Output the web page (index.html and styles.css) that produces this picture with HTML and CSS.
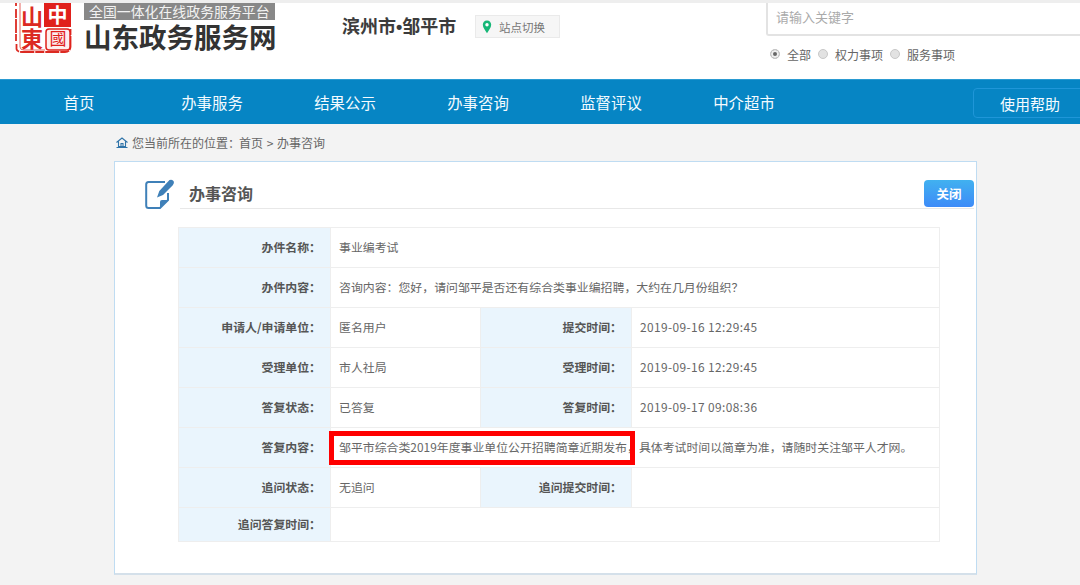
FILE: index.html
```html
<!DOCTYPE html>
<html lang="zh-CN">
<head>
<meta charset="utf-8">
<title>办事咨询</title>
<link rel="stylesheet" href="styles.css">
</head>
<body>
<header class="top">
  <div class="seal-wrap">
    <svg class="seal" width="60" height="52" viewBox="0 0 60 52">
      <path d="M1 0V3M1 6V38M1.500 41V46Q2 49 7 49H50Q55 49 55.500 44V26" fill="none" stroke="#dc2a22" stroke-width="1.800" stroke-dasharray="9 1 14 1"/>
      <path d="M5 0V44Q5 47 9 47H30" fill="none" stroke="#e6625d" stroke-width="1"/>
      <rect x="29" y="0" width="27" height="24" fill="#e0201b"/>
      <rect x="31" y="26" width="24" height="21" rx="3" fill="#fdeeee" stroke="#e0201b" stroke-width="1.500"/>
      <text x="42.500" y="20" class="seal-w">中</text>
      <text x="43" y="42" class="seal-ws">國</text>
      <text x="17" y="22" class="seal-r">山</text>
      <text x="17" y="44" class="seal-r">東</text>
    </svg>
  </div>
  <div class="brand">
    <div class="slogan">全国一体化在线政务服务平台</div>
    <div class="brand-name">山东政务服务网</div>
  </div>
  <div class="city">滨州市•邹平市</div>
  <div class="switch">
    <svg width="10" height="14" viewBox="0 0 10 14"><path d="M5 0.500C2.400 0.500 0.800 2.500 0.800 4.800C0.800 7.600 3.500 10.600 5 13.200C6.500 10.600 9.200 7.600 9.200 4.800C9.200 2.500 7.600 0.500 5 0.500Z" fill="#16b777"/><circle cx="5" cy="4.800" r="1.700" fill="#fff"/></svg>
    <span>站点切换</span>
  </div>
  <div class="search">
    <div class="search-box">请输入关键字</div>
    <div class="radios">
      <span class="radio checked"></span><span class="radio-label">全部</span>
      <span class="radio"></span><span class="radio-label">权力事项</span>
      <span class="radio"></span><span class="radio-label">服务事项</span>
    </div>
  </div>
</header>
<nav class="nav">
  <a class="nav-item">首页</a>
  <a class="nav-item">办事服务</a>
  <a class="nav-item">结果公示</a>
  <a class="nav-item">办事咨询</a>
  <a class="nav-item">监督评议</a>
  <a class="nav-item">中介超市</a>
  <a class="help">使用帮助</a>
</nav>
<main class="main">
  <div class="crumb">
    <svg width="12" height="11" viewBox="0 0 12 11"><path d="M0.500 5.500L6 1L11.500 5.500M2.500 4.500V9.500H9.500V4.500M5 9.500V6.500H7V9.500M0.500 10.500H11.500" fill="none" stroke="#2f73a8" stroke-width="1.100"/></svg>
    <span>您当前所在的位置：</span><span class="crumb-path">首页 &gt; 办事咨询</span>
  </div>
  <section class="panel">
    <div class="panel-head">
      <svg class="panel-icon" width="30" height="30" viewBox="0 0 30 30">
        <path d="M20 3H3.500Q1.200 3 1.200 5.500V26.500Q1.200 29 3.500 29H15L23 21V14" fill="none" stroke="#3f80b8" stroke-width="2"/>
        <path d="M15 29V23Q15 21 17 21H23Z" fill="#3f80b8"/>
        <path d="M24.500 1Q27.500 0 28.700 2.200Q29.700 4.500 27.800 6.200L18 16L12 18.500L14.300 12Z" fill="#3f80b8"/>
      </svg>
      <h1 class="panel-title">办事咨询</h1>
      <button class="close">关闭</button>
    </div>
    <table class="info">
      <colgroup><col class="c1"><col class="c2"><col class="c3"><col class="c4"></colgroup>
      <tr><th>办件名称：</th><td colspan="3">事业编考试</td></tr>
      <tr><th>办件内容：</th><td colspan="3">咨询内容：您好，请问邹平是否还有综合类事业编招聘，大约在几月份组织？</td></tr>
      <tr><th>申请人/申请单位：</th><td>匿名用户</td><th>提交时间：</th><td class="time">2019-09-16 12:29:45</td></tr>
      <tr><th>受理单位：</th><td>市人社局</td><th>受理时间：</th><td class="time">2019-09-16 12:29:45</td></tr>
      <tr><th>答复状态：</th><td>已答复</td><th>答复时间：</th><td class="time">2019-09-17 09:08:36</td></tr>
      <tr><th>答复内容：</th><td colspan="3" class="answer"><span class="mark"></span>邹平市综合类2019年度事业单位公开招聘简章近期发布，具体考试时间以简章为准，请随时关注邹平人才网。</td></tr>
      <tr><th>追问状态：</th><td>无追问</td><th>追问提交时间：</th><td></td></tr>
      <tr class="last"><th>追问答复时间：</th><td colspan="3"></td></tr>
    </table>
  </section>
</main>
</body>
</html>
```
FILE: styles.css
```css
* { box-sizing: border-box; }
html, body { margin: 0; padding: 0; }
body {
  width: 1080px;
  height: 585px;
  overflow: hidden;
  background: #f3f3f3;
  font-family: "Noto Sans CJK SC", "Liberation Sans", sans-serif;
  color: #555;
}
.top {
  height: 79px;
  background: #fff;
  border-top: 3px solid #eee;
  display: flex;
  align-items: flex-start;
}
.seal-wrap { width: 84px; padding-left: 15px; height: 52px; }
.seal { display: block; overflow: visible; }
.seal-w { font-size: 20px; fill: #fff; text-anchor: middle; font-weight: 700; }
.seal-ws { font-size: 17px; fill: #e0201b; text-anchor: middle; }
.seal-r { font-size: 22px; fill: #dc2a22; text-anchor: middle; font-weight: 700; }
.brand { width: 258px; }
.slogan {
  width: 191px;
  height: 17px;
  background: #888;
  color: #f2f2f2;
  font-size: 13.900px;
  line-height: 17px;
  padding-left: 5px;
  white-space: nowrap;
}
.brand-name {
  font-size: 27.500px;
  line-height: 32px;
  font-weight: 700;
  color: #333;
  white-space: nowrap;
}
.city {
  width: 133px;
  margin-top: 12px;
  font-family: "Liberation Sans", "Noto Sans CJK SC", sans-serif;
  font-size: 18px;
  line-height: 24px;
  font-weight: 700;
  color: #3c3c3c;
  white-space: nowrap;
}
.switch {
  width: 85px;
  height: 23px;
  margin-top: 12px;
  background: #f6f6f6;
  border: 1px solid #eaeaea;
  display: flex;
  align-items: center;
  gap: 7px;
  padding-left: 6px;
  font-size: 11.500px;
  color: #777;
  white-space: nowrap;
}
.search { margin-left: 206px; flex: 1; }
.search-box {
  height: 33px;
  border: 2px solid #e3e3e3;
  border-top: 0;
  border-right: 0;
  border-bottom-left-radius: 3px;
  padding-left: 8px;
  font-size: 13px;
  line-height: 28px;
  color: #aaa;
}
.radios {
  display: flex;
  align-items: center;
  margin-top: 9px;
  padding-left: 4px;
  font-size: 12px;
  line-height: 16px;
  color: #666;
}
.radio {
  width: 10px;
  height: 10px;
  border-radius: 50%;
  background: #e2e2e2;
  border: 1px solid #c8c8c8;
  margin-right: 7px;
}
.radio.checked { background: #666; box-shadow: inset 0 0 0 2px #eee; }
.radio-label { margin-right: 7px; margin-top: 2px; }
.nav {
  height: 45px;
  background: #0685c4;
  border-top: 1px solid #2a9bd2;
  display: flex;
  padding-left: 12.500px;
  position: relative;
}
.nav-item {
  width: 133px;
  text-align: center;
  color: #f4fbff;
  font-size: 15.400px;
  line-height: 44px;
}
.help {
  position: absolute;
  left: 973px;
  top: 8px;
  width: 120px;
  height: 30px;
  border: 1px solid #1f96d8;
  border-radius: 4px;
  color: #f4fbff;
  font-size: 15px;
  line-height: 30px;
  padding-left: 26px;
}
.main { padding: 0 103px 0 114px; }
.crumb {
  height: 37px;
  display: flex;
  align-items: center;
  gap: 4px;
  padding-left: 2px;
  font-size: 12px;
  color: #666;
}
.crumb-path { margin-left: -5px; word-spacing: 1px; }
.panel {
  height: 414px;
  background: #fff;
  border: 1px solid #bfdcf2;
  border-bottom: 2px solid #d4e0ea;
  padding: 17px 2px 0 30px;
}
.panel-head {
  display: flex;
  align-items: flex-start;
  height: 48px;
  position: relative;
}
.panel-icon { display: block; flex: none; }
.panel-title {
  margin: 0 0 0 5px;
  flex: 1;
  height: 30px;
  border-bottom: 1px solid #e8e8e8;
  padding-left: 9px;
  font-size: 16px;
  line-height: 29px;
  color: #555;
  font-weight: 700;
}
.close {
  position: absolute;
  right: 0;
  top: 1px;
  width: 50px;
  height: 27px;
  padding: 0;
  border: 0;
  border-radius: 4px;
  background: linear-gradient(#41b1f0, #3d8bf8);
  color: #fff;
  font-family: inherit;
  font-size: 12.500px;
  font-weight: 700;
}
.info {
  width: 761px;
  margin-left: 33px;
  border-collapse: collapse;
  table-layout: fixed;
  font-size: 11.900px;
}
.c1 { width: 152px; }
.c2 { width: 150px; }
.c3 { width: 151px; }
.c4 { width: 308px; }
.info th, .info td {
  height: 40px;
  border: 1px solid #eeeeee;
  padding: 0 0 2px;
  white-space: nowrap;
}
.info th {
  background: #eaf5fd;
  text-align: right;
  padding-right: 9px;
  color: #555;
  font-weight: 700;
}
.info td { padding-left: 8px; color: #666; }
.info .last th, .info .last td { height: 34px; }
.info .time { letter-spacing: 0.4px; }
.answer { position: relative; }
.mark {
  position: absolute;
  left: -2px;
  top: 3px;
  width: 306px;
  height: 34px;
  border: 5px solid #f00;
}
```
